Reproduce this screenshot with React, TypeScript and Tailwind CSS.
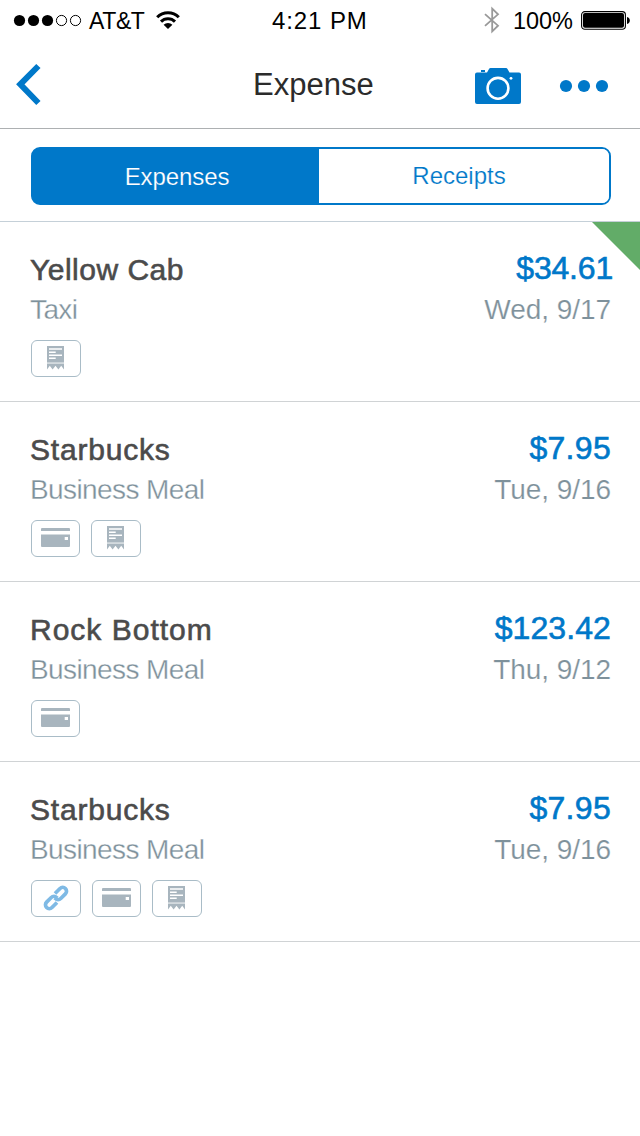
import React from "react";

type Badge = "link" | "card" | "receipt";

interface Entry {
  vendor: string;
  category: string;
  amount: string;
  date: string;
  badges: Badge[];
  flagged?: boolean;
  vendorSpacing: string;
  amountSpacing: string;
}

const entries: Entry[] = [
  {
    vendor: "Yellow Cab",
    category: "Taxi",
    amount: "$34.61",
    date: "Wed, 9/17",
    badges: ["receipt"],
    flagged: true,
    vendorSpacing: "tracking-[0.5px]",
    amountSpacing: "tracking-[-0.2px] -mr-[2px]",
  },
  {
    vendor: "Starbucks",
    category: "Business Meal",
    amount: "$7.95",
    date: "Tue, 9/16",
    badges: ["card", "receipt"],
    vendorSpacing: "tracking-[0.8px]",
    amountSpacing: "tracking-[0.3px]",
  },
  {
    vendor: "Rock Bottom",
    category: "Business Meal",
    amount: "$123.42",
    date: "Thu, 9/12",
    badges: ["card"],
    vendorSpacing: "tracking-[1px]",
    amountSpacing: "tracking-[0.1px]",
  },
  {
    vendor: "Starbucks",
    category: "Business Meal",
    amount: "$7.95",
    date: "Tue, 9/16",
    badges: ["link", "card", "receipt"],
    vendorSpacing: "tracking-[0.8px]",
    amountSpacing: "tracking-[0.3px]",
  },
];

function ReceiptIcon() {
  return (
    <svg className="mr-px" width="17" height="24" viewBox="0 0 17 24" fill="#a8b5be">
      <path d="M0 0H17V16.6H0Z" />
      <path d="M0 17.6H17V23.4L14.2 19.8L11.4 23.4L8.5 19.8L5.6 23.4L2.8 19.8L0 23.4Z" />
      <path d="M2 3H15M2 6.2H8.7M2 9.2H15M2 12.3H8.7" stroke="#fff" strokeWidth="1.4" />
    </svg>
  );
}

function CardIcon() {
  return (
    <svg width="29" height="19" viewBox="0 0 29 19" fill="#a8b5be">
      <path d="M1 0H28Q29 0 29 1V3H0V1Q0 0 1 0Z" />
      <path
        fillRule="evenodd"
        d="M0 6.4H29V18Q29 19 28 19H1Q0 19 0 18ZM23.7 9V12H27V9Z"
      />
    </svg>
  );
}

function LinkIcon() {
  return (
    <svg width="26" height="26" viewBox="0 0 26 26" fill="none" stroke="#7fbae5" strokeWidth="3.7">
      <g transform="rotate(-45 13 13)">
        <path d="M10.5 16.9H3.4A3.8 3.8 0 0 1 3.4 9.3H10A3.8 3.8 0 0 1 13.8 13.1V14" />
        <path d="M15.5 9.1H22.6A3.8 3.8 0 0 1 22.6 16.7H16A3.8 3.8 0 0 1 12.2 12.9V12" />
      </g>
    </svg>
  );
}

const badgeLayout: Record<Badge, string> = {
  card: "w-[49px] pt-[7px]",
  receipt: "w-[50px] pt-[5px]",
  link: "w-[50px] pt-[4px]",
};

function BadgeBox({ kind }: { kind: Badge }) {
  return (
    <span
      className={`flex h-[37px] items-start justify-center rounded-[6px] border border-[#a9bcc7] ${badgeLayout[kind]}`}
    >
      {kind === "receipt" && <ReceiptIcon />}
      {kind === "card" && <CardIcon />}
      {kind === "link" && <LinkIcon />}
    </span>
  );
}

function StatusBar() {
  return (
    <div className="flex h-10 items-center text-black">
      <svg className="ml-[13px]" width="70" height="14" viewBox="0 0 70 14">
        <circle cx="6.5" cy="7.5" r="5.6" />
        <circle cx="20.5" cy="7.5" r="5.6" />
        <circle cx="34.5" cy="7.5" r="5.6" />
        <circle cx="48.5" cy="7.5" r="5.1" fill="none" stroke="#000" />
        <circle cx="62.5" cy="7.5" r="5.1" fill="none" stroke="#000" />
      </svg>
      <span className="ml-[6px] mt-[2px] w-[66px] whitespace-nowrap text-[23px] leading-[38px] tracking-[-0.4px]">
        AT&amp;T
      </span>
      <svg width="26" height="20" viewBox="0 0 26 20" fill="none" stroke="#000" strokeWidth="3">
        <path d="M2.2 7.3A15 15 0 0 1 23.8 7.3" />
        <path d="M6 11.6A9.8 9.8 0 0 1 20 11.6" />
        <path d="M13 19L8.6 14.8A6.4 6.4 0 0 1 17.4 14.8Z" fill="#000" stroke="none" />
      </svg>
      <span className="ml-[91px] mt-[2px] w-[120px] whitespace-nowrap text-[24px] leading-[38px] tracking-[0.9px]">
        4:21 PM
      </span>
      <svg className="ml-[92px]" width="16" height="28" viewBox="0 0 16 28" fill="none" stroke="#999" strokeWidth="1.8">
        <path d="M1 8.2L14 19.7L8.2 25.3V2.7L14 8.3L1 19.8" />
      </svg>
      <span className="ml-[13px] mt-[2px] w-[68px] whitespace-nowrap text-[23.5px] leading-[38px] tracking-[-0.1px]">100%</span>
      <svg width="50" height="20" viewBox="0 0 50 20">
        <rect x="0.6" y="1.6" width="43.8" height="17.6" rx="3.2" fill="none" stroke="#000" strokeWidth="1.1" />
        <rect x="2" y="3" width="41" height="14.8" rx="2" />
        <path d="M46 7Q48.8 7.6 48.8 10.5T46 14Z" />
      </svg>
    </div>
  );
}

function NavBar() {
  return (
    <div className="flex h-[89px] items-start border-b border-[#adb0b2] text-[#0078c9]">
      <svg className="ml-4 mt-[23px]" width="26" height="43" viewBox="0 0 26 43" fill="none" stroke="currentColor" strokeWidth="6">
        <path d="M22.4 3L4.3 21.3L22.4 40" strokeLinejoin="miter" />
      </svg>
      <h1 className="ml-[211px] mt-[23px] w-[222px] whitespace-nowrap text-[31px] font-normal leading-[44px] text-[#2b2b2b]">
        Expense
      </h1>
      <svg className="mt-7" width="46" height="36" viewBox="0 0 46 36" fill="currentColor">
        <path d="M6 2H10V4H6ZM12 4.5L14 1Q14.5 0 15.5 0H31Q32 0 32.5 1L34.5 4.5H44Q46 4.5 46 6.5V34Q46 36 44 36H2Q0 36 0 34V6.5Q0 4.5 2 4.5Z" />
        <circle cx="23" cy="20.3" r="10.4" fill="none" stroke="#fff" strokeWidth="2.6" />
        <circle cx="36" cy="10.3" r="1.4" fill="#fff" />
      </svg>
      <svg className="ml-[38px] mt-[39px]" width="50" height="14" viewBox="0 0 50 14" fill="currentColor">
        <circle cx="7" cy="7" r="6.1" />
        <circle cx="25" cy="7" r="6.1" />
        <circle cx="43" cy="7" r="6.1" />
      </svg>
    </div>
  );
}

function EntryRow({ entry }: { entry: Entry }) {
  return (
    <li className="relative flex h-[180px] justify-between border-b border-[#d0d3d5] pl-[30px] pr-[29px] pt-[28px]">
      <div>
        <p className={`h-10 text-[30px] leading-10 text-[#4b4b4b] [-webkit-text-stroke:0.6px_#4b4b4b] ${entry.vendorSpacing}`}>
          {entry.vendor}
        </p>
        <p className="h-10 text-[28px] leading-10 tracking-[-0.6px] text-[#7e919b] [-webkit-text-stroke:0.3px_#fff]">
          {entry.category}
        </p>
        <div className="ml-px mt-[10px] flex gap-[11px]">
          {entry.badges.map((kind, index) => (
            <BadgeBox key={index} kind={kind} />
          ))}
        </div>
      </div>
      <div className="text-right">
        <p className={`-mt-[2px] h-10 text-[32px] leading-10 text-[#0078c9] [-webkit-text-stroke:0.6px_#0078c9] ${entry.amountSpacing}`}>
          {entry.amount}
        </p>
        <p className="mt-[2px] h-10 text-[28px] leading-10 tracking-[-0.05px] text-[#7e919b] [-webkit-text-stroke:0.2px_#fff]">
          {entry.date}
        </p>
      </div>
      {entry.flagged && (
        <svg className="absolute right-0 top-0" width="48" height="48" viewBox="0 0 48 48">
          <path d="M0 0H48V48Z" fill="#62ac68" />
        </svg>
      )}
    </li>
  );
}

export default function App() {
  return (
    <main className="h-[1136px] w-[640px] overflow-hidden bg-white font-['Liberation_Sans',Arial,sans-serif]">
      <StatusBar />
      <NavBar />
      <div className="h-[93px] border-b border-[#c5d0d8] pl-[31px] pr-[29px] pt-[18px]">
        <div className="flex h-[58px] overflow-hidden rounded-[9px] border-2 border-[#0078c9] bg-[linear-gradient(to_right,#0078c9_50px,#fff_50px)] text-center text-[24px]">
          <button className="w-[286px] bg-[#0078c9] pl-[2px] leading-[56px] tracking-[-0.1px] text-white [-webkit-text-stroke:0.2px_#0078c9]">
            Expenses
          </button>
          <button className="flex-1 bg-white pr-[10px] leading-[54px] text-[#0078c9] [-webkit-text-stroke:0.2px_#fff]">
            Receipts
          </button>
        </div>
      </div>
      <ul>
        {entries.map((entry, index) => (
          <EntryRow key={index} entry={entry} />
        ))}
      </ul>
    </main>
  );
}
